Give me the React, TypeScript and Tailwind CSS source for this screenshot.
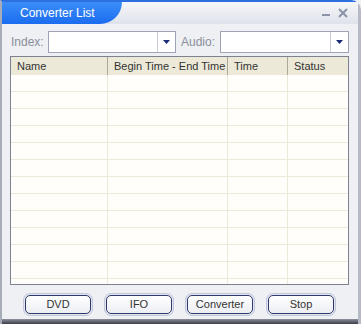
import React from 'react';

const font = { fontFamily: '"Liberation Sans", Arial, sans-serif' };

const Combo: React.FC<{ width: string }> = ({ width }) => (
  <div className={`flex h-[22px] shrink-0 ${width} border border-[#9fa3b8] bg-white`}>
    <div className="flex-1" />
    <div className="flex w-[18px] items-center justify-center border-l border-[#c9ccd8]">
      <svg width="7" height="4" viewBox="0 0 7 4">
        <polygon points="0,0 7,0 3.5,4" fill="#1c2a7a" />
      </svg>
    </div>
  </div>
);

const Btn: React.FC<{ label: string }> = ({ label }) => (
  <div className="rounded-[7px] border border-[#c2c8da] bg-[#e4e6ee] p-[1px]">
    <div className="flex h-[19px] w-[66px] items-center justify-center rounded-[5px] border border-[#2d3a6e] bg-gradient-to-b from-white to-[#eceef4] text-[11px] text-[#333]">
      {label}
    </div>
  </div>
);

const cols = ['w-[97px]', 'w-[120px]', 'w-[60px]', 'flex-1'];
const heads = ['Name', 'Begin Time - End Time', 'Time', 'Status'];

const App: React.FC = () => {
  const rows = Array.from({ length: 13 });
  return (
    <div className="h-[324px] w-[361px] overflow-hidden bg-[#eef0f4]" style={font}>
      <div className="relative flex h-[324px] flex-col rounded-tr-[10px] border-r-[3px] border-l-[2px] border-t-[2px] border-r-[#b6bac6] border-l-[#a8acb8] border-t-[#2d6fe0]">
        {/* title bar */}
        <div className="flex h-[22px] items-center bg-gradient-to-b from-[#f6f7fa] to-[#dfe2ea]">
          <div className="flex h-full w-[120px] items-center rounded-br-[22px] bg-gradient-to-b from-[#3b8df7] to-[#1c6cf0] pl-[18px] text-[12px] whitespace-nowrap text-white">
            Converter List
          </div>
          <div className="flex-1" />
          <div className="mr-[10px] flex items-center gap-[8px]">
            <div className="mt-[3px] h-[2px] w-[8px] bg-[#8a93a8]" />
            <svg width="10" height="10" viewBox="0 0 10 10">
              <path d="M1 1 L9 9 M9 1 L1 9" stroke="#8a93a8" strokeWidth="2" />
            </svg>
          </div>
        </div>

        {/* selectors */}
        <div className="mt-[7px] flex items-center pl-[9px] text-[12px] whitespace-nowrap text-[#8a8e9a]">
          <span className="w-[37px] shrink-0">Index:</span>
          <Combo width="w-[128px]" />
          <span className="w-[44px] shrink-0 pl-[5px]">Audio:</span>
          <Combo width="w-[129px]" />
        </div>

        {/* table */}
        <div className="ml-[8px] mt-[3px] flex h-[229px] w-[339px] flex-col overflow-hidden border border-[#7d8190] bg-white text-[11px] text-[#333]">
          <div className="flex h-[18px] shrink-0 bg-[#ece9d8]">
            {heads.map((h, i) => (
              <div key={h} className={`${cols[i]} flex items-center whitespace-nowrap border-r border-[#aca899] pl-[6px] last:border-r-0`}>
                {h}
              </div>
            ))}
          </div>
          {rows.map((_, r) => (
            <div key={r} className="flex h-[17px] shrink-0 border-b border-[#ece9d8] bg-[#fffefb]">
              {cols.map((c, i) => (
                <div key={i} className={`${c} border-r border-[#ece9d8] last:border-r-0`} />
              ))}
            </div>
          ))}
        </div>

        {/* buttons */}
        <div className="mt-[8px] flex gap-[11px] pl-[21px]">
          {['DVD', 'IFO', 'Converter', 'Stop'].map((b) => (
            <Btn key={b} label={b} />
          ))}
        </div>
        <div className="flex-1" />
        <div className="h-[5px] bg-gradient-to-b from-[#8e929e] to-[#3c3f48]" />
      </div>
    </div>
  );
};

export default App;
